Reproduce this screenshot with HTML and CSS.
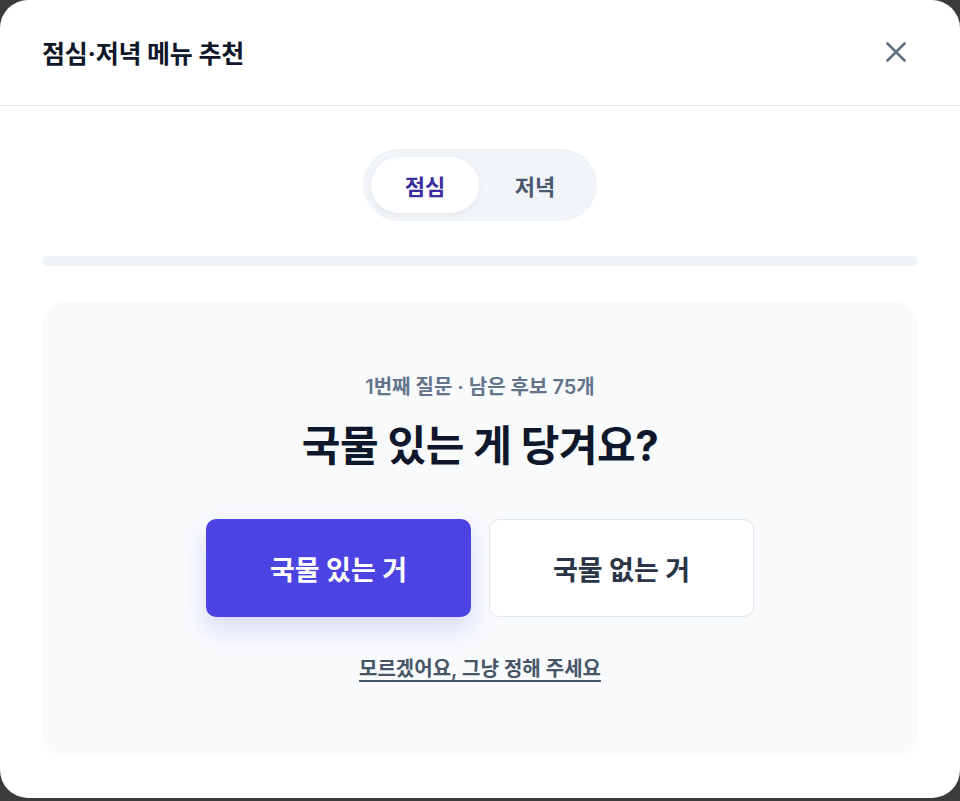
FILE: index.html
```html
<!DOCTYPE html>
<html lang="ko">
<head>
<meta charset="utf-8">
<title>점심·저녁 메뉴 추천</title>
<link rel="stylesheet" href="styles.css">
</head>
<body>
<div class="modal">
  <header class="modal-header">
    <h1 class="modal-title">점심·저녁 메뉴 추천</h1>
    <button class="close-btn" aria-label="닫기">
      <svg width="20" height="20" viewBox="0 0 20 20" fill="none" stroke="currentColor" stroke-width="2.6" stroke-linecap="round">
        <path d="M1.5 1.5 L18.5 18.5 M18.5 1.5 L1.5 18.5"/>
      </svg>
    </button>
  </header>
  <main class="modal-body">
    <div class="toggle-wrap">
      <div class="toggle">
        <button class="toggle-item active">점심</button>
        <button class="toggle-item">저녁</button>
      </div>
    </div>
    <div class="progress"><div class="progress-fill"></div></div>
    <section class="card">
      <p class="step">1번째 질문 · 남은 후보 75개</p>
      <h2 class="question">국물 있는 게 당겨요?</h2>
      <div class="choices">
        <button class="choice primary">국물 있는 거</button>
        <button class="choice secondary">국물 없는 거</button>
      </div>
      <a class="skip" href="#">모르겠어요, 그냥 정해 주세요</a>
    </section>
  </main>
</div>
</body>
</html>
```
FILE: styles.css
```css
* { box-sizing: border-box; }
html, body { margin: 0; padding: 0; }
body {
  width: 960px;
  height: 801px;
  background: #3b3b3e;
  font-family: "Inter", "Noto Sans CJK KR", sans-serif;
  overflow: hidden;
}
.modal {
  width: 960px;
  height: 798px;
  background: #ffffff;
  border-radius: 28px;
  overflow: hidden;
  display: flex;
  flex-direction: column;
}
.modal-header {
  height: 106px;
  flex: none;
  display: flex;
  align-items: center;
  justify-content: space-between;
  padding: 0 44px 2px 42px;
  border-bottom: 1px solid #e2e6f0;
}
.modal-title {
  margin: 0;
  font-size: 25px;
  font-weight: 700;
  color: #0f172a;
  letter-spacing: -0.2px;
}
.close-btn {
  width: 40px;
  height: 40px;
  border: 0;
  background: transparent;
  padding: 0;
  display: flex;
  align-items: center;
  justify-content: center;
  color: #5f6f86;
  cursor: pointer;
}
.modal-body {
  padding: 44px 42px 42px;
  display: flex;
  flex-direction: column;
}
.toggle-wrap {
  display: flex;
  justify-content: center;
}
.toggle {
  display: flex;
  padding: 7px;
  gap: 2px;
  background: #f1f4f8;
  border-radius: 36px;
  box-shadow: 0 0 0 1px #eef2f6;
}
.toggle-item {
  width: 108px;
  height: 56px;
  border: 0;
  border-radius: 28px;
  background: transparent;
  font-family: inherit;
  font-size: 22px;
  font-weight: 700;
  color: #4b5870;
  cursor: pointer;
}
.toggle-item.active {
  background: #ffffff;
  color: #3a2fa0;
  box-shadow: 0 2px 6px rgba(15, 23, 42, 0.06);
}
.progress {
  margin-top: 36px;
  height: 10px;
  border-radius: 5px;
  background: #eff2f7;
  overflow: hidden;
}
.progress-fill {
  width: 0;
  height: 100%;
  background: #4f46e5;
}
.card {
  margin-top: 36px;
  height: 454px;
  background: #f8fafc;
  border-radius: 24px;
  padding-top: 73px;
  display: flex;
  flex-direction: column;
  align-items: center;
}
.step {
  margin: 0;
  line-height: 24px;
  font-size: 20px;
  font-weight: 600;
  color: #64748b;
}
.question {
  margin: 23px 0 0;
  line-height: 48px;
  font-size: 42px;
  font-weight: 700;
  color: #0f172a;
  letter-spacing: -0.5px;
}
.choices {
  margin-top: 49px;
  display: flex;
  gap: 18px;
}
.choice {
  width: 265px;
  height: 98px;
  border-radius: 10px;
  font-family: inherit;
  font-size: 27px;
  font-weight: 700;
  cursor: pointer;
}
.choice.primary {
  background: #4c44e2;
  border: 0;
  color: #ffffff;
  box-shadow: 0 12px 24px rgba(79, 70, 229, 0.18);
}
.choice.secondary {
  background: #ffffff;
  border: 1px solid #e2e6ee;
  color: #2b3547;
}
.skip {
  margin-top: 40px;
  line-height: 24px;
  font-size: 20px;
  font-weight: 600;
  color: #475569;
  text-decoration: underline;
  text-underline-offset: 4px;
  text-decoration-thickness: 1.5px;
}
```
